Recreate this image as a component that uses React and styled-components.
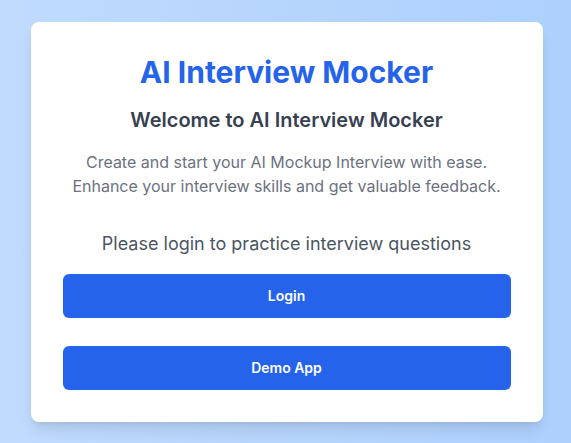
import React from "react";
import styled, { createGlobalStyle } from "styled-components";

const GlobalStyle = createGlobalStyle`
  * { box-sizing: border-box; }
  body {
    margin: 0;
    font-family: Inter, "Noto Sans", sans-serif;
  }
`;

const Page = styled.div`
  min-height: 100vh;
  display: flex;
  align-items: center;
  justify-content: center;
  padding-left: 2px;
  background: linear-gradient(to right, #c0dbfd, #add0fd);
`;

const Card = styled.div`
  width: 512px;
  padding: 32px;
  background: #fff;
  border-radius: 8px;
  box-shadow: 0 10px 15px -3px rgb(0 0 0 / 10%), 0 4px 6px -4px rgb(0 0 0 / 10%);
  text-align: center;
`;

const Title = styled.h1`
  margin: 0 0 16px;
  font-size: 30px;
  line-height: 36px;
  font-weight: 700;
  color: #2563eb;
`;

const Subtitle = styled.h2`
  margin: 0 0 16px;
  font-size: 20px;
  line-height: 28px;
  font-weight: 600;
  color: #374151;
`;

const Desc = styled.p`
  margin: 0 0 32px;
  font-size: 16px;
  line-height: 24px;
  color: #6b7280;
`;

const Prompt = styled.p`
  margin: 0 0 16px;
  font-size: 18px;
  line-height: 28px;
  color: #4b5563;
`;

const Actions = styled.div`
  display: flex;
  flex-direction: column;
  gap: 28px;
`;

const Button = styled.button`
  width: 100%;
  height: 44px;
  border: none;
  border-radius: 6px;
  background: #2563eb;
  color: #fff;
  font-family: inherit;
  font-size: 14px;
  font-weight: 600;
  cursor: pointer;
`;

export default function App() {
  return (
    <>
      <GlobalStyle />
      <Page>
        <Card>
          <Title>AI Interview Mocker</Title>
          <Subtitle>Welcome to AI Interview Mocker</Subtitle>
          <Desc>
            Create and start your AI Mockup Interview with ease.
            <br />
            Enhance your interview skills and get valuable feedback.
          </Desc>
          <Prompt>Please login to practice interview questions</Prompt>
          <Actions>
            <Button>Login</Button>
            <Button>Demo App</Button>
          </Actions>
        </Card>
      </Page>
    </>
  );
}
